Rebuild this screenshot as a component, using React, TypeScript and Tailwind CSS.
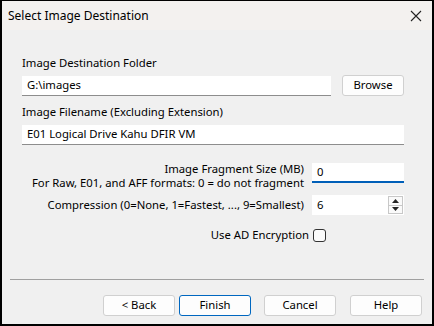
import React from "react";

const font = { fontFamily: '"Noto Sans", "Segoe UI", Arial, sans-serif' };

function Btn({ label, primary, w }: { label: string; primary?: boolean; w: string }) {
  return (
    <div
      className={`${w} h-[21px] flex items-center justify-center rounded-[3px] bg-[#fdfdfd] text-[11.3px] text-black border ${
        primary ? "border-[#0067c0]" : "border-[#d0d0d0]"
      }`}
    >
      {label}
    </div>
  );
}

export default function App() {
  return (
    <div
      className="w-[434px] h-[326px] bg-black border-l-2 border-r-2 border-t border-b-2 border-black flex flex-col overflow-hidden text-[11.3px] text-black"
      style={font}
    >
      <div className="h-[29px] bg-[#f3f1ef] flex items-center justify-between pl-[6px] pr-[10px] shrink-0">
        <span className="text-[12px] leading-none">Select Image Destination</span>
        <svg width="12" height="12" viewBox="0 0 12 12">
          <path d="M1 1 L11 11 M11 1 L1 11" stroke="#222" strokeWidth="1.1" />
        </svg>
      </div>
      <div className="flex-1 bg-[#f0f0f0] flex flex-col pl-[20px] pr-[26px] whitespace-nowrap">
        <div className="mt-[26px] leading-[14px]">Image Destination Folder</div>
        <div className="mt-[5px] flex items-center">
          <div className="w-[309px] h-[20px] bg-white border-b border-[#8d8d8d] flex items-center pl-[5px]">
            G:\images
          </div>
          <div className="ml-[11px]">
            <Btn label="Browse" w="w-[62px]" />
          </div>
        </div>
        <div className="mt-[9px] leading-[14px]">Image Filename (Excluding Extension)</div>
        <div className="mt-[6px] w-[382px] h-[20px] bg-white border-b border-[#8d8d8d] flex items-center pl-[5px]">
          E01 Logical Drive Kahu DFIR VM
        </div>
        <div className="mt-[18px] h-[20px] flex items-start">
          <div className="w-[282px] text-right leading-[14px] -mt-[1px]">
            <div>Image Fragment Size (MB)</div>
            <div>For Raw, E01, and AFF formats: 0 = do not fragment</div>
          </div>
          <div className="ml-[8px] w-[92px] h-[20px] bg-white border-b-2 border-[#005fb8] flex items-center pl-[5px]">
            0
          </div>
        </div>
        <div className="mt-[12px] flex items-center">
          <div className="w-[282px] text-right">Compression (0=None, 1=Fastest, ..., 9=Smallest)</div>
          <div className="ml-[8px] w-[92px] h-[20px] bg-white flex items-center">
            <div className="flex-1 pl-[5px]">6</div>
            <div className="w-[15px] h-[18px] flex flex-col border border-[#c8c8c8] mr-[1px]">
              <div className="flex-1 flex items-center justify-center border-b border-[#c8c8c8] bg-[#fafafa]">
                <svg width="7" height="4" viewBox="0 0 7 4"><path d="M3.5 0 L7 4 L0 4 Z" fill="#222" /></svg>
              </div>
              <div className="flex-1 flex items-center justify-center bg-[#fafafa]">
                <svg width="7" height="4" viewBox="0 0 7 4"><path d="M0 0 L7 0 L3.5 4 Z" fill="#222" /></svg>
              </div>
            </div>
          </div>
        </div>
        <div className="mt-[12px] flex items-center justify-end pr-[80px]">
          <span>Use AD Encryption</span>
          <div className="ml-[4px] w-[13px] h-[13px] rounded-[3px] border border-[#333] bg-[#fbfbfb]" />
        </div>
      </div>
      <div className="bg-[#f0f0f0] h-[45px] shrink-0 flex flex-col px-[8px]">
        <div className="h-[1px] bg-[#a0a0a0]" />
        <div className="mt-[15px] flex pl-[93px]">
          <Btn label="< Back" w="w-[72px]" />
          <div className="ml-[4px]"><Btn label="Finish" primary w="w-[72px]" /></div>
          <div className="ml-[13px]"><Btn label="Cancel" w="w-[72px]" /></div>
          <div className="ml-[14px]"><Btn label="Help" w="w-[72px]" /></div>
        </div>
      </div>
    </div>
  );
}
